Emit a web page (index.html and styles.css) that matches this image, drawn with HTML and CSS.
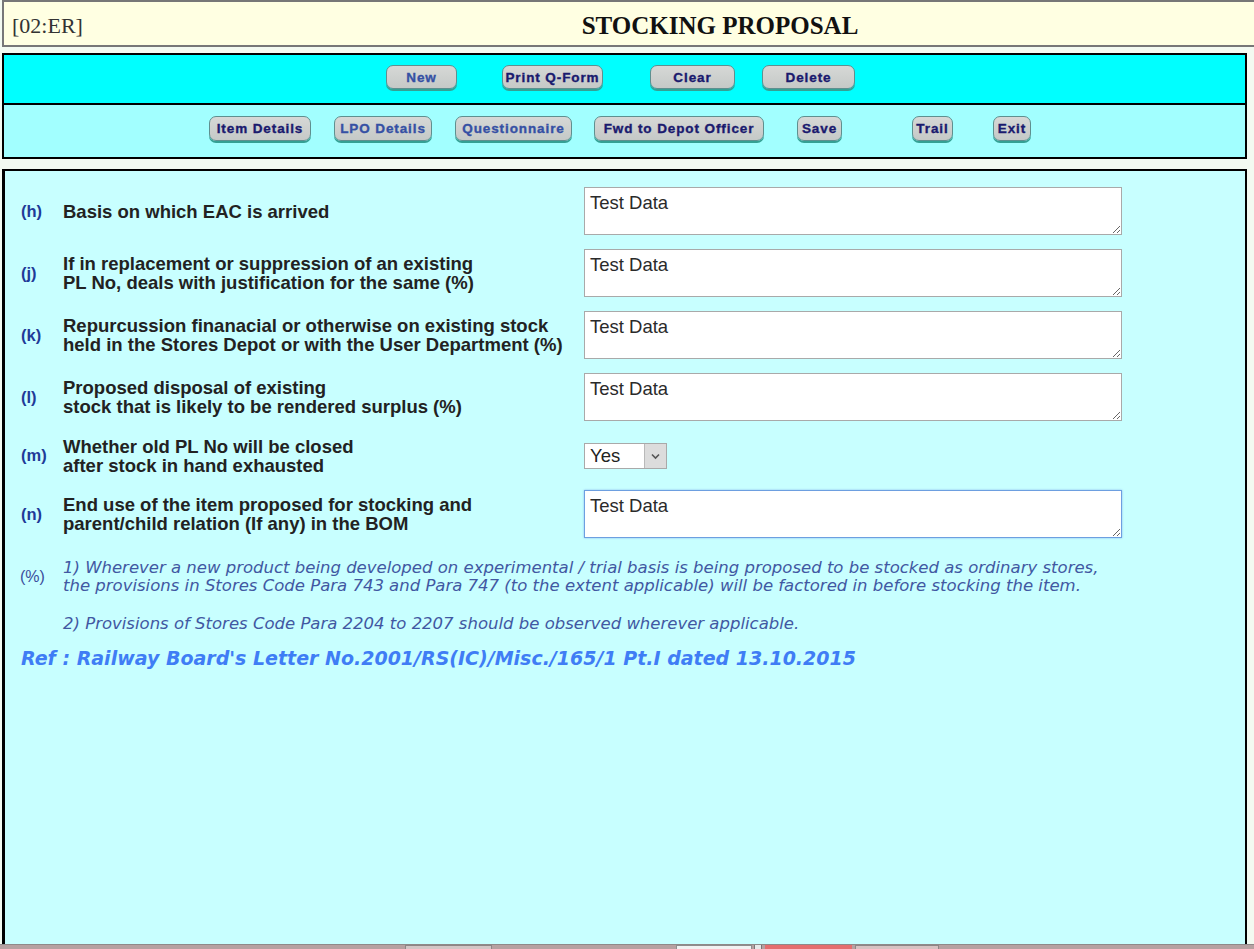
FILE: index.html
```html
<!DOCTYPE html>
<html lang="en">
<head>
<meta charset="utf-8">
<title>Stocking Proposal</title>
<link rel="stylesheet" href="styles.css">
</head>
<body>
<header class="topbar">
  <div class="code">[02:ER]</div>
  <div class="title">STOCKING PROPOSAL</div>
</header>

<nav class="toolbar">
  <div class="tb-row tb-main">
    <button class="btn btn-dim b-new">New</button>
    <button class="btn b-print">Print Q-Form</button>
    <button class="btn b-clear">Clear</button>
    <button class="btn b-delete">Delete</button>
  </div>
  <div class="tb-row tb-sub">
    <button class="btn b-item">Item Details</button>
    <button class="btn btn-dim b-lpo">LPO Details</button>
    <button class="btn btn-dim b-quest">Questionnaire</button>
    <button class="btn b-fwd">Fwd to Depot Officer</button>
    <button class="btn b-save">Save</button>
    <button class="btn b-trail">Trail</button>
    <button class="btn b-exit">Exit</button>
  </div>
</nav>

<main class="panel">
  <div class="form">
    <div class="row">
      <span class="mark">(h)</span>
      <label class="lbl">Basis on which EAC is arrived</label>
      <textarea class="ta">Test Data</textarea>
    </div>
    <div class="row">
      <span class="mark">(j)</span>
      <label class="lbl">If in replacement or suppression of an existing<br>PL No, deals with justification for the same (%)</label>
      <textarea class="ta">Test Data</textarea>
    </div>
    <div class="row">
      <span class="mark">(k)</span>
      <label class="lbl">Repurcussion finanacial or otherwise on existing stock<br>held in the Stores Depot or with the User Department (%)</label>
      <textarea class="ta">Test Data</textarea>
    </div>
    <div class="row">
      <span class="mark">(l)</span>
      <label class="lbl">Proposed disposal of existing<br>stock that is likely to be rendered surplus (%)</label>
      <textarea class="ta">Test Data</textarea>
    </div>
    <div class="row row-sel">
      <span class="mark">(m)</span>
      <label class="lbl">Whether old PL No will be closed<br>after stock in hand exhausted</label>
      <div class="sel-wrap">
        <select class="sel"><option>Yes</option><option>No</option></select>
      </div>
    </div>
    <div class="row">
      <span class="mark">(n)</span>
      <label class="lbl">End use of the item proposed for stocking and<br>parent/child relation (If any) in the BOM</label>
      <textarea class="ta ta-focus">Test Data</textarea>
    </div>
  </div>

  <div class="notes">
    <span class="note-mark">(%)</span>
    <p class="note">1) Wherever a new product being developed on experimental / trial basis is being proposed to be stocked as ordinary stores,<br>the provisions in Stores Code Para 743 and Para 747 (to the extent applicable) will be factored in before stocking the item.</p>
    <span></span>
    <p class="note note-2">2) Provisions of Stores Code Para 2204 to 2207 should be observed wherever applicable.</p>
  </div>

  <p class="ref">Ref : Railway Board's Letter No.2001/RS(IC)/Misc./165/1 Pt.I dated 13.10.2015</p>
</main>

<div class="taskstrip">
  <span class="ts ts-a"></span>
  <span class="ts ts-b"></span>
  <span class="ts ts-c"></span>
  <span class="ts ts-d"></span>
  <span class="ts ts-e"></span>
</div>
</body>
</html>
```

FILE: styles.css
```css
* { box-sizing: border-box; }

html, body {
  margin: 0;
  padding: 0;
}

body {
  width: 1254px;
  height: 949px;
  overflow: hidden;
  position: relative;
  background: #f3faf1;
  font-family: "Liberation Sans", Arial, sans-serif;
}

/* ---------- header ---------- */
.topbar {
  display: flex;
  align-items: center;
  height: 47px;
  margin: 0 -8px 0 2px;
  padding-top: 4px;
  background: #ffffe2;
  border: 2px solid #777;
  font-family: "Liberation Serif", "Times New Roman", serif;
}

.code {
  width: 176px;
  padding-left: 8px;
  font-size: 22px;
  color: #333;
}

.title {
  flex: 1;
  text-align: center;
  font-size: 25px;
  font-weight: bold;
  color: #111;
}

/* ---------- toolbar ---------- */
.toolbar {
  margin: 6px 7px 0 2px;
  border: 2px solid #000;
}

.tb-row {
  display: flex;
  justify-content: center;
  align-items: flex-start;
}

.tb-main {
  height: 50px;
  padding: 10px 8px 0 0;
  background: #00ffff;
  border-bottom: 2px solid #000;
}

.tb-sub {
  height: 52px;
  padding: 11px 9px 0 0;
  background: #a2ffff;
}

.btn {
  height: 24px;
  padding: 0;
  border: 1px solid #5f8f8f;
  border-radius: 7px;
  background: linear-gradient(#d6d8d6, #c5c9c7);
  box-shadow: 0 2px 0 #35a094;
  font-family: "Liberation Sans", Arial, sans-serif;
  font-size: 13.5px;
  font-weight: bold;
  letter-spacing: 0.9px;
  -webkit-text-stroke: 0.35px #1a1a6e;
  color: #1a1a6e;
  text-align: center;
  white-space: nowrap;
}

.btn-dim {
  color: #3550a4;
  -webkit-text-stroke: 0.35px #3550a4;
}

.b-new    { width: 71px; }
.b-print  { width: 101px; margin-left: 45px; }
.b-clear  { width: 85px;  margin-left: 47px; }
.b-delete { width: 93px;  margin-left: 27px; }

.b-item   { width: 102px; height: 25px; }
.b-lpo    { width: 98px;  height: 25px; margin-left: 23px; }
.b-quest  { width: 117px; height: 25px; margin-left: 23px; }
.b-fwd    { width: 170px; height: 25px; margin-left: 22px; }
.b-save   { width: 45px;  height: 25px; margin-left: 33px; }
.b-trail  { width: 41px;  height: 25px; margin-left: 70px; }
.b-exit   { width: 38px;  height: 25px; margin-left: 40px; }

/* ---------- main panel ---------- */
.panel {
  height: 800px;
  margin: 10px 7px 0 2px;
  padding: 16px 0 0 16px;
  background: #c8ffff;
  border: 2px solid #000;
  border-left-width: 3px;
}

.form {
  display: flex;
  flex-direction: column;
  gap: 14px;
}

.row {
  display: grid;
  grid-template-columns: 42px 521px 538px;
  align-items: center;
  min-height: 48px;
}

.row-sel {
  min-height: 41px;
}

.mark {
  font-size: 16.5px;
  font-weight: bold;
  color: #1f3b98;
}

.lbl {
  font-size: 18.5px;
  font-weight: bold;
  line-height: 19px;
  color: #222;
}

.ta {
  display: block;
  width: 538px;
  height: 48px;
  margin: 0;
  padding: 4px 5px 2px;
  border: 1px solid #a9a9a9;
  border-radius: 0;
  background: #fff;
  font-family: "Liberation Sans", Arial, sans-serif;
  font-size: 18.5px;
  line-height: 21px;
  color: #2a2a2a;
  outline: none;
}

.ta-focus {
  border-color: #6d9fe0;
  box-shadow: 0 0 2px #8cb6ee;
}

.sel-wrap {
  position: relative;
  width: 83px;
  height: 26px;
}

.sel {
  width: 83px;
  height: 26px;
  margin: 0;
  padding: 0 0 0 5px;
  -webkit-appearance: none;
  appearance: none;
  border: 1px solid #a9a9a9;
  border-radius: 0;
  background: #fff;
  font-family: "Liberation Sans", Arial, sans-serif;
  font-size: 18.5px;
  color: #222;
}

.sel-wrap::after {
  content: "";
  position: absolute;
  top: 1px;
  right: 1px;
  width: 21px;
  height: 24px;
  border-left: 1px solid #b9b9b9;
  background:
    url("data:image/svg+xml;utf8,<svg xmlns='http://www.w3.org/2000/svg' width='21' height='24'><path d='M7 10.5 L10.5 14 L14 10.5' fill='none' stroke='%23555' stroke-width='1.6'/></svg>") no-repeat center,
    #dcdcdc;
  pointer-events: none;
}

/* ---------- notes ---------- */
.notes {
  display: grid;
  grid-template-columns: 42px 1fr;
  align-items: center;
  row-gap: 20px;
  margin-top: 21px;
}

.note-mark {
  font-family: "Liberation Sans", Arial, sans-serif;
  font-size: 16px;
  color: #3a4e9c;
  margin-left: -1px;
}

.note {
  margin: 0;
  font-family: "DejaVu Sans", Verdana, sans-serif;
  font-style: italic;
  font-size: 16.5px;
  line-height: 18px;
  color: #4158a2;
}

.ref {
  margin: 13px 0 0 0;
  font-family: "DejaVu Sans", Verdana, sans-serif;
  font-style: italic;
  font-weight: bold;
  font-size: 19px;
  line-height: 24px;
  color: #3f7df5;
}

/* ---------- bottom strip (window behind) ---------- */
.taskstrip {
  position: fixed;
  left: 0;
  right: 0;
  bottom: 0;
  height: 5px;
  display: flex;
  background: #b6a1a1;
  border-top: 1px solid #8f8a8a;
}

.ts { display: block; height: 100%; }
.ts-a { width: 87px;  margin-left: 405px; background: #d3c6c6; border: 1px solid #8e8686; border-bottom: 0; }
.ts-b { width: 76px;  margin-left: 184px; background: #f2f2f2; border: 1px solid #8e8e8e; border-bottom: 0; }
.ts-c { width: 8px;   margin-left: 2px;   background: #e8e8e8; border-left: 1px solid #777; border-right: 1px solid #777; }
.ts-d { width: 87px;  margin-left: 3px;   background: #e46f6f; }
.ts-e { width: 84px;  margin-left: 3px;   background: #d7c2c2; border: 1px solid #8e8686; border-bottom: 0; }
```
